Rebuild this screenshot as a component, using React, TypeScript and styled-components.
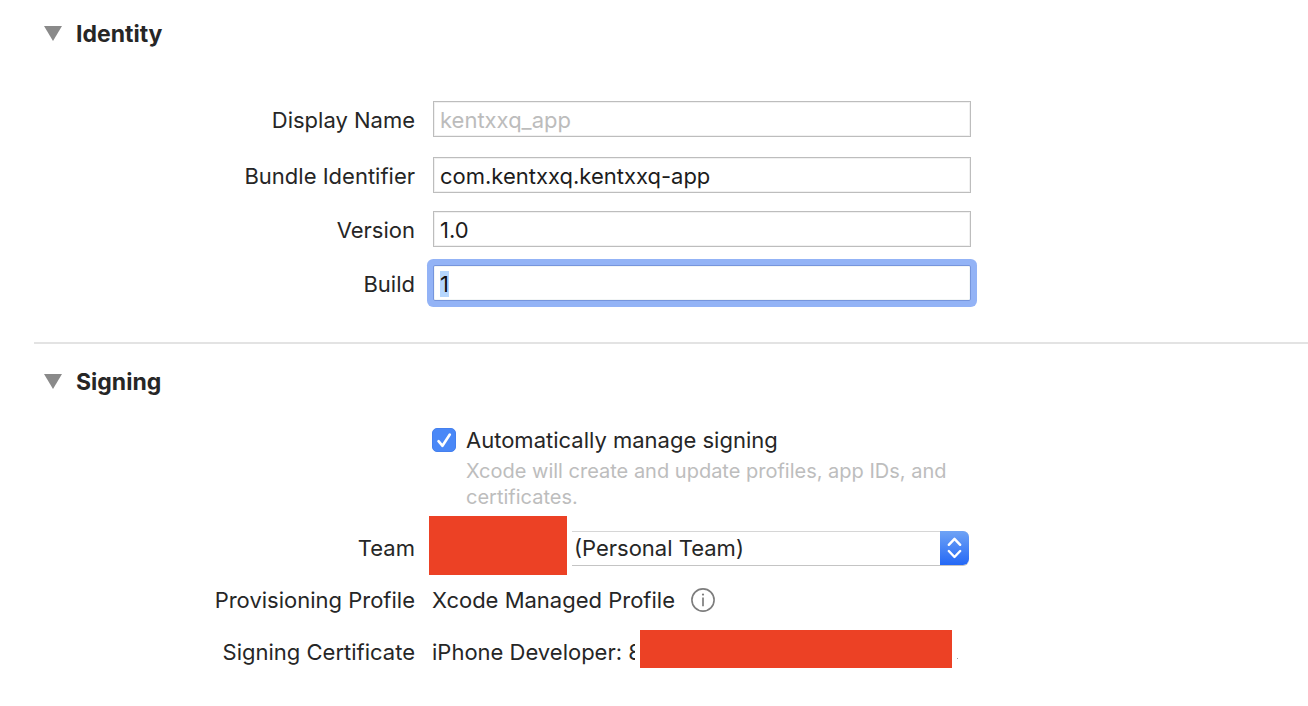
import React, { useEffect, useRef, useState } from "react";
import styled, { createGlobalStyle, css } from "styled-components";

const GlobalStyle = createGlobalStyle`
  *, *::before, *::after { box-sizing: border-box; }
  body {
    margin: 0;
    background: #ffffff;
    color: #262626;
    font-family: Inter, "Liberation Sans", sans-serif;
    font-size: 22px;
    line-height: 28px;
  }
`;

const Page = styled.main`
  display: flex;
  flex-direction: column;
  padding: 20px 0 36px;
`;

const Section = styled.section`
  display: flex;
  flex-direction: column;
`;

const Divider = styled.hr`
  width: calc(100% - 34px);
  height: 2px;
  margin: 41px 0 24px 34px;
  border: 0;
  background: #e3e3e3;
`;

const Heading = styled.h2`
  margin: 0;
  padding-left: 44px;
  font-size: 23px;
  line-height: 28px;
  font-weight: 700;
`;

const Disclosure = styled.button`
  display: flex;
  align-items: center;
  gap: 14px;
  padding: 0;
  border: 0;
  background: none;
  color: inherit;
  font: inherit;
`;

const Triangle = styled.svg`
  display: block;
  width: 18px;
  height: 16px;
  fill: #8a8a8a;
`;

const columns = css`
  display: grid;
  grid-template-columns: 415px minmax(0, 538px);
  column-gap: 18px;
`;

const Fields = styled.div`
  display: flex;
  flex-direction: column;
  gap: 18px;
  padding-top: 53px;
`;

const FieldRow = styled.div<{ $loose?: boolean }>`
  ${columns}
  align-items: center;
  margin-bottom: ${(p) => (p.$loose ? 2 : 0)}px;
`;

const Label = styled.label`
  padding-top: 2px;
  text-align: right;
  white-space: nowrap;
`;

const TextBox = styled.input`
  width: 100%;
  height: 36px;
  padding: 2px 6px 0;
  border: 1px solid #bdbdbd;
  border-radius: 0;
  background: #ffffff;
  box-shadow: inset 0 0 0 1px #f1f1f1;
  color: #1c1c1c;
  font: inherit;
  outline: none;

  &::placeholder {
    color: #bcbcbc;
    opacity: 1;
  }
  &::selection {
    background: #b5d6fd;
    color: #111111;
  }
  &:focus {
    border-color: #7695dc;
    box-shadow: inset 0 0 0 1px #f3f6f6, 0 0 0 6px #93b3f6;
    border-radius: 2px;
  }
`;

const CheckArea = styled.div`
  ${columns}
  padding-top: 30px;
`;

const CheckColumn = styled.div`
  grid-column: 2;
  display: grid;
  grid-template-columns: 24px minmax(0, 1fr);
  column-gap: 10px;
  row-gap: 4px;
  align-items: center;
  margin-left: -1px;
`;

const CheckWrap = styled.span`
  display: grid;
  width: 24px;
  height: 24px;

  > * {
    grid-area: 1 / 1;
  }
`;

const CheckBox = styled.input`
  appearance: none;
  width: 24px;
  height: 24px;
  margin: 0;
  border: 1px solid #bdbdbd;
  border-radius: 5px;
  background: #ffffff;

  &:checked {
    border-color: #4580ee;
    background: #4a88f7;
  }
`;

const CheckMark = styled.svg`
  width: 24px;
  height: 24px;
  pointer-events: none;
`;

const Hint = styled.p`
  grid-column: 2;
  margin: 0;
  color: #bdbdbd;
  font-size: 20px;
  line-height: 26px;
`;

const DetailRow = styled.div<{ $space: number; $drop?: number }>`
  ${columns}
  align-items: center;
  margin-top: ${(p) => p.$space}px;

  > ${Label}, > dt {
    padding-top: ${(p) => p.$drop ?? 0}px;
  }
`;

const Term = styled.dt`
  text-align: right;
  white-space: nowrap;
`;

const Details = styled.dl`
  margin: 0;
`;

const Value = styled.dd`
  display: flex;
  align-items: center;
  margin: 0 0 0 -1px;
  white-space: nowrap;
`;

const TeamValue = styled.div`
  display: flex;
  align-items: center;
  gap: 5px;
  margin: 0 2px 0 -4px;
`;

const Redaction = styled.span<{ $width: number; $height: number; $margin?: number }>`
  flex: 0 0 auto;
  box-sizing: content-box;
  width: ${(p) => p.$width}px;
  height: ${(p) => p.$height}px;
  border-left: ${(p) => p.$margin ?? 0}px solid #ffffff;
  background: #ec4125;
`;

const SelectFrame = styled.div`
  display: grid;
  grid-template-columns: minmax(0, 1fr) 29px;
  flex: 1 1 auto;
  padding-top: 5px;
`;

const Select = styled.select`
  grid-area: 1 / 1 / 2 / 3;
  appearance: none;
  width: 100%;
  height: 35px;
  padding: 0 32px 0 2px;
  border: solid #c4c4c4;
  border-width: 1px 0;
  border-top-color: #d6d6d6;
  border-radius: 0 6px 6px 0;
  background: #ffffff;
  color: #262626;
  font: inherit;
  outline: none;
`;

const Stepper = styled.span`
  grid-area: 1 / 2;
  z-index: 1;
  display: flex;
  height: 34px;
  border-radius: 0 6px 6px 0;
  background: linear-gradient(#6fa3f5, #2468f6);
  pointer-events: none;
`;

const InfoButton = styled.button`
  display: flex;
  margin-left: 16px;
  padding: 0;
  border: 0;
  background: none;
`;

const Certificate = styled.span`
  width: 203px;
  padding-top: 6px;
`;

const Remainder = styled.span`
  width: 1px;
  height: 1px;
  margin: 18px 0 0 5px;
  background: #a0a0a0;
`;

function SectionHeading({ title }: { title: string }) {
  return (
    <Heading>
      <Disclosure type="button" aria-expanded="true">
        <Triangle viewBox="0 0 18 16" aria-hidden="true">
          <path d="M0 0h18L9 15z" />
        </Triangle>
        {title}
      </Disclosure>
    </Heading>
  );
}

export default function App() {
  const buildRef = useRef<HTMLInputElement>(null);
  const [automatic, setAutomatic] = useState(true);

  useEffect(() => {
    buildRef.current?.focus();
    buildRef.current?.select();
  }, []);

  return (
    <>
      <GlobalStyle />
      <Page>
        <Section>
          <SectionHeading title="Identity" />
          <Fields>
            <FieldRow $loose>
              <Label htmlFor="display-name">Display Name</Label>
              <TextBox id="display-name" placeholder="kentxxq_app" />
            </FieldRow>
            <FieldRow>
              <Label htmlFor="bundle">Bundle Identifier</Label>
              <TextBox id="bundle" defaultValue="com.kentxxq.kentxxq-app" spellCheck={false} />
            </FieldRow>
            <FieldRow>
              <Label htmlFor="version">Version</Label>
              <TextBox id="version" defaultValue="1.0" />
            </FieldRow>
            <FieldRow>
              <Label htmlFor="build">Build</Label>
              <TextBox id="build" ref={buildRef} defaultValue="1" />
            </FieldRow>
          </Fields>
        </Section>
        <Divider />
        <Section>
          <SectionHeading title="Signing" />
          <CheckArea>
            <CheckColumn>
              <CheckWrap>
                <CheckBox
                  id="automatic"
                  type="checkbox"
                  checked={automatic}
                  onChange={(e) => setAutomatic(e.target.checked)}
                />
                {automatic && (
                  <CheckMark viewBox="0 0 24 24" aria-hidden="true">
                    <path
                      d="M6.5 13.2l4 4.6L17.8 6.5"
                      fill="none"
                      stroke="#fff"
                      strokeWidth="2.6"
                      strokeLinecap="round"
                      strokeLinejoin="round"
                    />
                  </CheckMark>
                )}
              </CheckWrap>
              <label htmlFor="automatic">Automatically manage signing</label>
              <Hint>Xcode will create and update profiles, app IDs, and certificates.</Hint>
            </CheckColumn>
          </CheckArea>
          <DetailRow $space={6} $drop={5}>
            <Label htmlFor="team">Team</Label>
            <TeamValue>
              <Redaction $width={138} $height={59} />
              <SelectFrame>
                <Select id="team">
                  <option>(Personal Team)</option>
                </Select>
                <Stepper>
                  <svg width="29" height="34" viewBox="0 0 29 34" aria-hidden="true">
                    <path
                      d="M8.8 13.8l5.7-6 5.7 6M8.8 20l5.7 6 5.7-6"
                      fill="none"
                      stroke="#fff"
                      strokeWidth="2.4"
                      strokeLinecap="round"
                      strokeLinejoin="round"
                    />
                  </svg>
                </Stepper>
              </SelectFrame>
            </TeamValue>
          </DetailRow>
          <Details>
            <DetailRow $space={11}>
              <Term>Provisioning Profile</Term>
              <Value>
                Xcode Managed Profile
                <InfoButton type="button" aria-label="Profile information">
                  <svg width="24" height="24" viewBox="0 0 24 24" fill="none" aria-hidden="true">
                    <circle cx="12" cy="12" r="11.1" stroke="#7d7d7d" strokeWidth="1.6" />
                    <path d="M12 9.6v8.6" stroke="#7d7d7d" strokeWidth="1.7" />
                    <circle cx="12" cy="6.6" r="1.1" fill="#7d7d7d" />
                  </svg>
                </InfoButton>
              </Value>
            </DetailRow>
            <DetailRow $space={16} $drop={6}>
              <Term>Signing Certificate</Term>
              <Value>
                <Certificate>iPhone Developer: 8</Certificate>
                <Redaction $width={312} $height={38} $margin={5} />
                <Remainder />
              </Value>
            </DetailRow>
          </Details>
        </Section>
      </Page>
    </>
  );
}
